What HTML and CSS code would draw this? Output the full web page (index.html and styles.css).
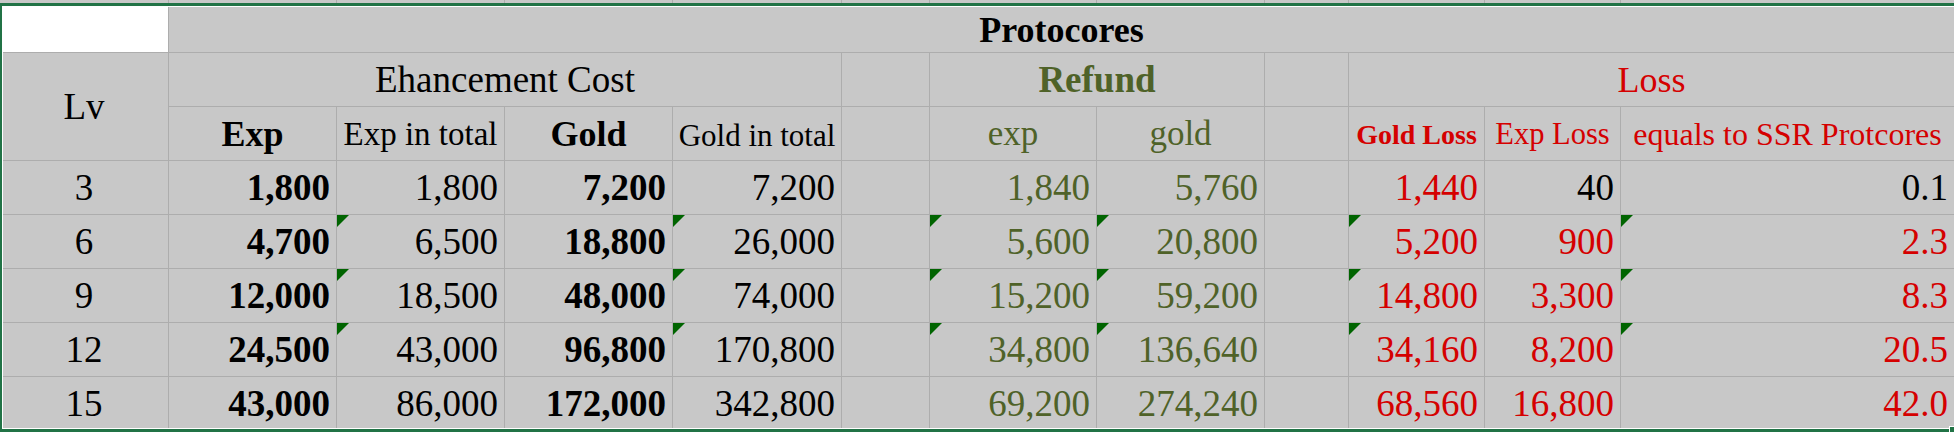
FILE: index.html
```html
<!DOCTYPE html>
<html>
<head>
<meta charset="utf-8">
<link rel="stylesheet" href="styles.css">
</head>
<body>
<div class="wrap">
  <div class="sheet">
    <!-- previous (cut) row -->
    <div class="c"></div><div class="c"></div><div class="c"></div><div class="c"></div><div class="c"></div><div class="c"></div>
    <div class="c"></div><div class="c"></div><div class="c"></div><div class="c"></div><div class="c"></div><div class="c"></div>

    <!-- row 1 -->
    <div class="c blank"></div>
    <div class="c ctr bold title span-all">Protocores</div>

    <!-- row 2 -->
    <div class="c ctr lv">Lv</div>
    <div class="c ctr span-cost">Ehancement Cost</div>
    <div class="c"></div>
    <div class="c ctr bold green span-refund">Refund</div>
    <div class="c"></div>
    <div class="c ctr red f36 span-loss">Loss</div>

    <!-- row 3 -->
    <div class="c ctr bold f36">Exp</div>
    <div class="c ctr f33 hdr">Exp in total</div>
    <div class="c ctr bold f36">Gold</div>
    <div class="c ctr f31 hdr2">Gold in total</div>
    <div class="c"></div>
    <div class="c ctr green f35">exp</div>
    <div class="c ctr green f35">gold</div>
    <div class="c"></div>
    <div class="c ctr bold red f28 hdr">Gold Loss</div>
    <div class="c ctr red f305 hdr">Exp Loss</div>
    <div class="c ctr red f32 hdr">equals to SSR Protcores</div>

    <!-- data rows -->
    <div class="c ctr">3</div>
    <div class="c num bold">1,800</div>
    <div class="c num">1,800</div>
    <div class="c num bold">7,200</div>
    <div class="c num">7,200</div>
    <div class="c"></div>
    <div class="c num green">1,840</div>
    <div class="c num green">5,760</div>
    <div class="c"></div>
    <div class="c num red">1,440</div>
    <div class="c num">40</div>
    <div class="c num">0.1</div>

    <div class="c ctr">6</div>
    <div class="c num bold">4,700</div>
    <div class="c num tri">6,500</div>
    <div class="c num bold">18,800</div>
    <div class="c num tri">26,000</div>
    <div class="c"></div>
    <div class="c num green tri">5,600</div>
    <div class="c num green tri">20,800</div>
    <div class="c"></div>
    <div class="c num red tri">5,200</div>
    <div class="c num red">900</div>
    <div class="c num red tri">2.3</div>

    <div class="c ctr">9</div>
    <div class="c num bold">12,000</div>
    <div class="c num tri">18,500</div>
    <div class="c num bold">48,000</div>
    <div class="c num tri">74,000</div>
    <div class="c"></div>
    <div class="c num green tri">15,200</div>
    <div class="c num green tri">59,200</div>
    <div class="c"></div>
    <div class="c num red tri">14,800</div>
    <div class="c num red">3,300</div>
    <div class="c num red tri">8.3</div>

    <div class="c ctr">12</div>
    <div class="c num bold">24,500</div>
    <div class="c num tri">43,000</div>
    <div class="c num bold">96,800</div>
    <div class="c num tri">170,800</div>
    <div class="c"></div>
    <div class="c num green tri">34,800</div>
    <div class="c num green tri">136,640</div>
    <div class="c"></div>
    <div class="c num red tri">34,160</div>
    <div class="c num red">8,200</div>
    <div class="c num red tri">20.5</div>

    <div class="c ctr">15</div>
    <div class="c num bold">43,000</div>
    <div class="c num">86,000</div>
    <div class="c num bold">172,000</div>
    <div class="c num">342,800</div>
    <div class="c"></div>
    <div class="c num green">69,200</div>
    <div class="c num green">274,240</div>
    <div class="c"></div>
    <div class="c num red">68,560</div>
    <div class="c num red">16,800</div>
    <div class="c num red">42.0</div>
  </div>
  <div class="selection"></div>
  <div class="handle"></div>
</div>
</body>
</html>
```

FILE: styles.css
```css
html, body {
  margin: 0;
  padding: 0;
  overflow: hidden;
  background: #ffffff;
}

.wrap {
  position: relative;
  width: 1954px;
  height: 432px;
  overflow: hidden;
}

.sheet {
  display: grid;
  grid-template-columns: 168px 167px 167px 167px 168px 87px 166px 167px 83px 135px 135px 333px;
  grid-template-rows: 3px 48px 53px 53px 53px 53px 53px 53px 53px;
  gap: 1px;
  padding-bottom: 1px;
  background: #adadad;
  font-family: "Liberation Serif", "Times New Roman", serif;
  font-size: 37px;
  color: #000;
}

.c {
  position: relative;
  background: #c8c8c8;
  display: flex;
  align-items: center;
  white-space: nowrap;
  overflow: hidden;
}

.blank { background: #ffffff; }

.ctr { justify-content: center; }
.num { justify-content: flex-end; padding-right: 6px; }

.bold { font-weight: bold; }
.green { color: #4f6228; }
.red { color: #d50000; }

.title {
  font-size: 36px;
  align-items: flex-end;
  padding-bottom: 1px;
}

.span-all { grid-column: 2 / 13; }
.lv { grid-row: 3 / 5; }
.span-cost { grid-column: 2 / 6; }
.span-refund { grid-column: 7 / 9; }
.span-loss { grid-column: 10 / 13; }

.f36 { font-size: 36px; }
.f35 { font-size: 35px; }
.f33 { font-size: 33px; }
.f32 { font-size: 32px; }
.f31 { font-size: 31px; }
.f305 { font-size: 30.5px; }
.f28 { font-size: 28px; }

.hdr { padding-top: 2px; }
.hdr2 { padding-top: 4px; }

.tri::before {
  content: "";
  position: absolute;
  top: 0;
  left: 0;
  width: 0;
  height: 0;
  border-top: 12px solid #006400;
  border-right: 12px solid transparent;
}

.selection {
  position: absolute;
  top: 3px;
  left: -1px;
  width: 2000px;
  height: 429px;
  box-sizing: border-box;
  border: 3px solid #217346;
  box-shadow: inset 0 0 0 1px #ffffff;
  pointer-events: none;
}

.handle {
  position: absolute;
  left: 1949px;
  top: 426px;
  width: 8px;
  height: 8px;
  box-sizing: border-box;
  background: #217346;
  border-top: 1px solid #ffffff;
  border-left: 1px solid #ffffff;
}
```
